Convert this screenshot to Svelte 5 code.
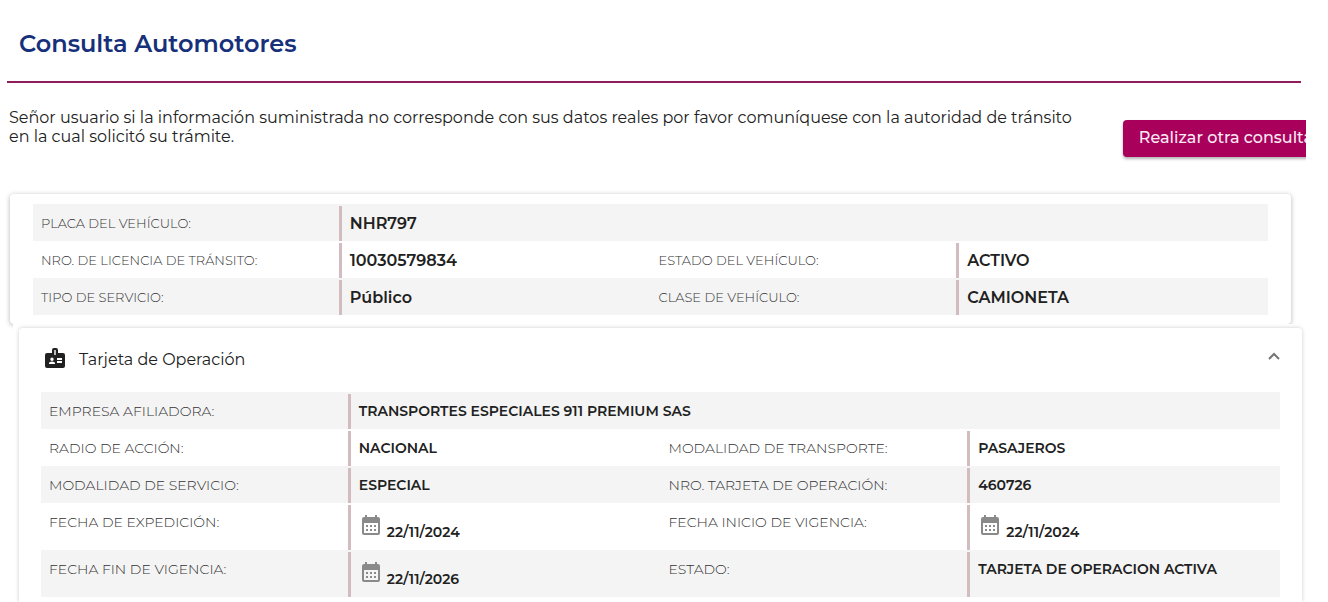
<script lang="ts">
	interface Field {
		label: string;
		value: string;
		date?: boolean;
	}

	const vehicle: Field[][] = [
		[{ label: 'PLACA DEL VEHÍCULO:', value: 'NHR797' }],
		[
			{ label: 'NRO. DE LICENCIA DE TRÁNSITO:', value: '10030579834' },
			{ label: 'ESTADO DEL VEHÍCULO:', value: 'ACTIVO' }
		],
		[
			{ label: 'TIPO DE SERVICIO:', value: 'Público' },
			{ label: 'CLASE DE VEHÍCULO:', value: 'CAMIONETA' }
		]
	];

	const operation: Field[][] = [
		[{ label: 'EMPRESA AFILIADORA:', value: 'TRANSPORTES ESPECIALES 911 PREMIUM SAS' }],
		[
			{ label: 'RADIO DE ACCIÓN:', value: 'NACIONAL' },
			{ label: 'MODALIDAD DE TRANSPORTE:', value: 'PASAJEROS' }
		],
		[
			{ label: 'MODALIDAD DE SERVICIO:', value: 'ESPECIAL' },
			{ label: 'NRO. TARJETA DE OPERACIÓN:', value: '460726' }
		],
		[
			{ label: 'FECHA DE EXPEDICIÓN:', value: '22/11/2024', date: true },
			{ label: 'FECHA INICIO DE VIGENCIA:', value: '22/11/2024', date: true }
		],
		[
			{ label: 'FECHA FIN DE VIGENCIA:', value: '22/11/2026', date: true },
			{ label: 'ESTADO:', value: 'TARJETA DE OPERACION ACTIVA' }
		]
	];

	let open = $state(true);
</script>

{#snippet fieldRows(rows: Field[][])}
	{#each rows as row}
		<div class="row">
			{#each row as field}
				<dt>{field.label}</dt>
				<dd class:date={field.date}>
					{#if field.date}
						<svg class="calendar" viewBox="0 0 20 22" width="20" height="22" aria-hidden="true">
							<path
								fill="#8a8a8a"
								fill-rule="evenodd"
								d="M4 1h2v2h8V1h2v2h1a2 2 0 0 1 2 2v14a2 2 0 0 1-2 2H3a2 2 0 0 1-2-2V5a2 2 0 0 1 2-2h1zM3 9v10h14V9zM5 11h2v2H5zM9 11h2v2H9zM13 11h2v2h-2zM5 15h2v2H5zM9 15h2v2H9zM13 15h2v2h-2z"
							/>
						</svg>
					{/if}
					<span>{field.value}</span>
				</dd>
			{/each}
		</div>
	{/each}
{/snippet}

<main>
	<header>
		<h1>Consulta Automotores</h1>
	</header>

	<div class="intro">
		<p>
			Señor usuario si la información suministrada no corresponde con sus datos reales por favor
			comuníquese con la autoridad de tránsito en la cual solicitó su trámite.
		</p>
		<button class="again" type="button">Realizar otra consulta</button>
	</div>

	<section class="card summary">
		<dl>{@render fieldRows(vehicle)}</dl>
	</section>

	<div class="accordion">
		<section class="card panel">
			<button class="toggle" type="button" aria-expanded={open} onclick={() => (open = !open)}>
				<svg class="badge" viewBox="0 0 24 24" width="24" height="24" aria-hidden="true">
					<path
						fill="#212121"
						fill-rule="evenodd"
						d="M20 7h-5V4a2 2 0 0 0-2-2h-2a2 2 0 0 0-2 2v3H4a2 2 0 0 0-2 2v11a2 2 0 0 0 2 2h16a2 2 0 0 0 2-2V9a2 2 0 0 0-2-2zM9 11.5a1.7 1.7 0 1 1 0 3.4 1.7 1.7 0 0 1 0-3.4zm3 6.5H6v-.6c0-.6.36-1.15.92-1.39a5.2 5.2 0 0 1 4.16 0c.56.24.92.78.92 1.39zM11.3 4h1.4v5h-1.4zM19 17h-5v-2h5zm0-3h-5v-2h5z"
					/>
				</svg>
				<span>Tarjeta de Operación</span>
				<svg class="chevron" class:open viewBox="0 0 12 8" width="12" height="8" aria-hidden="true">
					<path fill="none" stroke="#757575" stroke-width="2" d="M1 1l5 5 5-5" />
				</svg>
			</button>
			{#if open}
				<dl class="compact">{@render fieldRows(operation)}</dl>
			{/if}
		</section>
	</div>
</main>

<style>
	:global(body) {
		background: #fff;
	}

	main {
		box-sizing: border-box;
		min-height: 100vh;
		margin-right: 22px;
		overflow: hidden;
		font-family: Montserrat, Inter, sans-serif;
		color: #212121;
	}

	header {
		margin: 0 5px 0 7px;
		padding: 28px 12px 21px;
		border-bottom: 2px solid #8f1d5c;
	}

	h1 {
		margin: 0;
		font-size: 24px;
		line-height: 32px;
		font-weight: 600;
		color: #17307a;
	}

	.intro {
		display: flex;
		align-items: flex-start;
		gap: 32px;
		padding: 25px 0 37px 9px;
	}

	.intro p {
		flex: 1;
		margin: 0;
		font-size: 16px;
		line-height: 19px;
		font-weight: 400;
	}

	.again {
		flex: none;
		height: 37px;
		margin: 12px -23px 0 0;
		padding: 0 16px 2px;
		border: 0;
		border-radius: 4px;
		background: #a9005c;
		box-shadow: 0 2px 3px rgba(0, 0, 0, 0.3);
		font: 500 16px/35px Montserrat, Inter, sans-serif;
		color: #fce9f3;
		white-space: nowrap;
	}

	.card {
		border-radius: 4px;
		background: #fff;
	}

	.summary {
		margin: 0 15px 0 10px;
		padding: 10px 23px 9px;
		box-shadow: 0 1px 5px rgba(0, 0, 0, 0.3);
	}

	dl {
		margin: 0;
	}

	.row {
		display: grid;
		grid-template-columns: repeat(4, minmax(0, 1fr));
	}

	.row:nth-child(odd) {
		background: #f4f4f4;
	}

	dt,
	dd {
		margin: 2px 0 0;
		padding: 0 8px;
		line-height: 35px;
		white-space: nowrap;
	}

	dt {
		border-right: 3px solid #d3bcc0;
		font-size: 13px;
		font-weight: 300;
		color: #333;
	}

	dd {
		font-size: 16px;
		font-weight: 600;
	}

	.compact dt,
	.compact dd {
		font-size: 14px;
	}

	.date {
		display: flex;
		align-items: flex-start;
		gap: 6px;
		height: 45px;
		padding-left: 10px;
	}

	.date span {
		padding-top: 10px;
	}

	.calendar {
		margin-top: 9px;
	}

	.accordion {
		position: relative;
		margin-left: 13px;
		padding: 4px 4px 0 6px;
		background: #fff;
	}

	.panel {
		padding-bottom: 5px;
		border-radius: 4px 4px 0 0;
		box-shadow: 0 0 4px rgba(0, 0, 0, 0.2);
	}

	.panel dl {
		margin: 0 22px;
	}

	.toggle {
		display: flex;
		align-items: center;
		gap: 12px;
		width: 100%;
		height: 64px;
		padding: 0 22px 0 24px;
		border: 0;
		background: none;
		font: 400 16px/20px Montserrat, Inter, sans-serif;
		color: #212121;
		cursor: pointer;
	}

	.badge {
		margin-bottom: 4px;
	}

	.chevron {
		margin: 0 0 8px auto;
	}

	.chevron.open {
		transform: rotate(180deg);
	}
</style>
